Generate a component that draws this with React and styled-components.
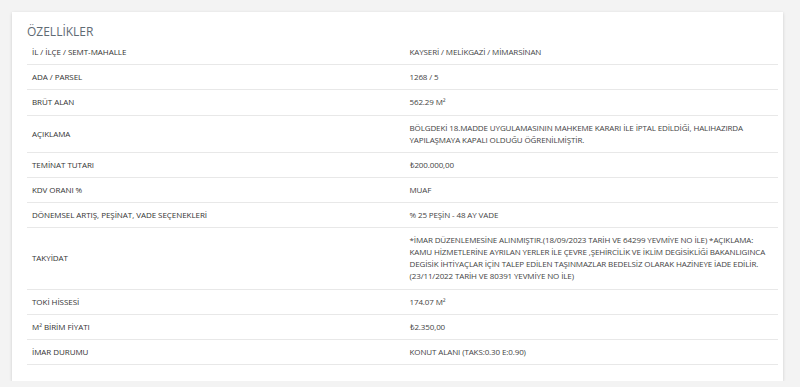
import React from 'react';
import styled, { createGlobalStyle } from 'styled-components';

const GlobalStyle = createGlobalStyle`
  html, body {
    margin: 0;
    padding: 0;
    background: #f3f3f3;
    font-family: "Open Sans", "Liberation Sans", sans-serif;
  }
`;

const Page = styled.div`
  padding: 12px 17px 0 12px;
`;

const Card = styled.section`
  background: #fff;
  box-shadow: 0 1px 3px rgba(0, 0, 0, 0.16);
  padding: 12px 5px 16px 15px;
`;

const Title = styled.h2`
  margin: 0;
  font-size: 12px;
  line-height: 16px;
  font-weight: 400;
  color: #5f6b74;
`;

const Table = styled.div`
  display: flex;
  flex-direction: column;
`;

const Row = styled.div`
  display: grid;
  grid-template-columns: 1fr 1fr;
  align-items: center;
  border-bottom: 1px solid #e8e8e8;
`;

const Cell = styled.div`
  padding: 6px 4px 6.2px ${(p) => (p.$value ? '7px' : '5px')};
  font-size: 8px;
  line-height: 12px;
  letter-spacing: ${(p) => (p.$value ? '-0.12px' : '-0.05px')};
  color: ${(p) => (p.$value ? '#444' : '#333')};
  text-transform: uppercase;
`;

const Line = styled.span`
  display: block;
  white-space: nowrap;
`;

const rows = [
  ['İL / İLÇE / SEMT-MAHALLE', 'KAYSERİ / MELİKGAZİ / MİMARSİNAN'],
  ['ADA / PARSEL', '1268 / 5'],
  ['BRÜT ALAN', '562.29 M²'],
  [
    'AÇIKLAMA',
    [
      'BÖLGDEKİ 18.MADDE UYGULAMASININ MAHKEME KARARI İLE İPTAL EDİLDİĞİ, HALIHAZIRDA',
      'YAPILAŞMAYA KAPALI OLDUĞU ÖĞRENİLMİŞTİR.',
    ],
  ],
  ['TEMİNAT TUTARI', '₺200.000,00'],
  ['KDV ORANI %', 'MUAF'],
  ['DÖNEMSEL ARTIŞ, PEŞİNAT, VADE SEÇENEKLERİ', '% 25 PEŞİN - 48 AY VADE'],
  [
    'TAKYİDAT',
    [
      '*İMAR DÜZENLEMESİNE ALINMIŞTIR.(18/09/2023 TARİH VE 64299 YEVMİYE NO İLE) *AÇIKLAMA:',
      'KAMU HİZMETLERİNE AYRILAN YERLER İLE ÇEVRE ,ŞEHİRCİLİK VE İKLİM DEGİSİKLİĞİ BAKANLIGINCA',
      'DEGİSİK İHTİYAÇLAR İÇİN TALEP EDİLEN TAŞINMAZLAR BEDELSİZ OLARAK HAZİNEYE İADE EDİLİR.',
      '(23/11/2022 TARİH VE 80391 YEVMİYE NO İLE)',
    ],
  ],
  ['TOKİ HİSSESİ', '174.07 M²'],
  ['M² BİRİM FİYATI', '₺2.350,00'],
  ['İMAR DURUMU', 'KONUT ALANI (TAKS:0.30 E:0.90)'],
];

const App = () => {
  return (
    <Page>
      <GlobalStyle />
      <Card>
        <Title>ÖZELLİKLER</Title>
        <Table>
          {rows.map(([label, value]) => (
            <Row key={label}>
              <Cell>{label}</Cell>
              <Cell $value>
                {Array.isArray(value)
                  ? value.map((line) => <Line key={line}>{line}</Line>)
                  : value}
              </Cell>
            </Row>
          ))}
        </Table>
      </Card>
    </Page>
  );
};

export default App;
